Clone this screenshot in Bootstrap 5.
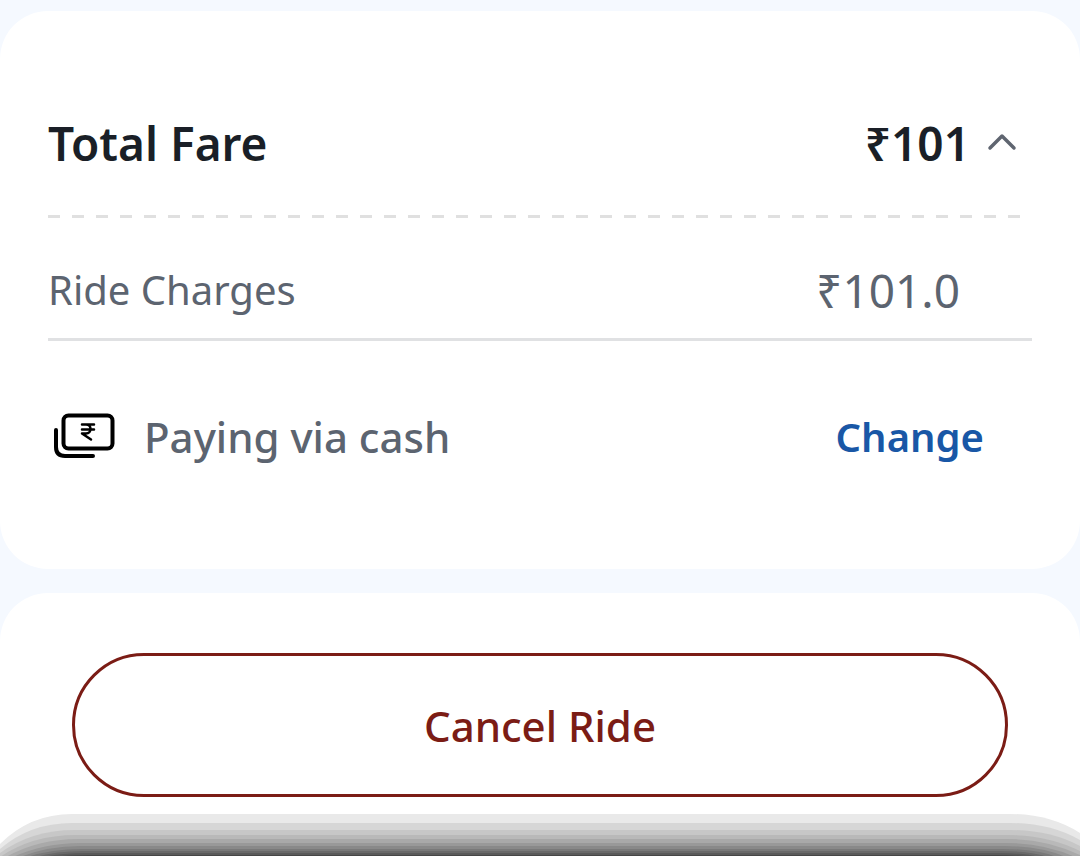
<!DOCTYPE html>
<html lang="en">
<head>
<meta charset="utf-8">
<meta name="viewport" content="width=device-width, initial-scale=1">
<title>Ride fare</title>
<link href="https://cdn.jsdelivr.net/npm/bootstrap@5.3.0/dist/css/bootstrap.min.css" rel="stylesheet">
<style>
  body { background: #f5f9ff; font-family: "Noto Sans", "Open Sans", sans-serif; color: #1a1f27; font-size: 42px; line-height: 60px; }
  .page { padding-top: 11px; gap: 24px; min-height: 100vh; overflow: hidden; }
  .panel { background: #fff; border-radius: 48px; }
  .fare-panel { padding: 96px 48px 102px; }
  .actions-panel { padding: 60px 72px; border-radius: 48px 48px 0 0; }
  .total { font-size: 46px; line-height: 72px; font-weight: 600; gap: 16px; padding: 0 14px 0 0; color: #1a1f27; }
  .muted { color: #5c6470; }
  .dashes { height: 3px; margin: 36px 12px 42px 0; background: repeating-linear-gradient(90deg, #e0e0e0 0 12px, transparent 12px 24px); }
  .charges { font-size: 40px; padding-right: 72px; height: 81px; border-bottom: 3px solid #e0e1e3; }
  .amount { font-size: 46px; }
  .payment { padding: 66px 48px 0 0; }
  .method { font-weight: 500; margin-left: 24px; }
  .change { font-size: 40px; font-weight: 600; color: #1957a6; text-decoration: none; }
  .cancel { height: 144px; border: 3px solid #7b1c15; border-radius: 72px; color: #7b1c15; font-size: 42px; font-weight: 500; }
  .cancel:hover { border-color: #7b1c15; color: #7b1c15; }
  .sheet-shadow { height: 43px; pointer-events: none; }
</style>
</head>
<body>
<main class="page d-flex flex-column position-relative">
  <section class="panel fare-panel">
    <button type="button" class="btn total w-100 border-0 d-flex align-items-center" aria-expanded="true" aria-controls="breakdown">
      <span class="me-auto">Total Fare</span>
      <span>₹101</span>
      <svg width="32" height="24" viewBox="0 0 32 24" fill="none" stroke="#5f6570" stroke-width="3.500" stroke-linecap="round" stroke-linejoin="round" aria-hidden="true"><path d="M4 17 16 5l12 12"/></svg>
    </button>
    <div class="dashes"></div>
    <div id="breakdown" class="charges muted d-flex justify-content-between">
      <span>Ride Charges</span>
      <span class="amount">₹101.0</span>
    </div>
    <div class="payment d-flex align-items-center">
      <svg width="72" height="60" viewBox="48 407 72 60" fill="none" stroke="#000" stroke-width="4" stroke-linecap="round" stroke-linejoin="round" aria-hidden="true">
        <rect x="63.500" y="415.500" width="49" height="33" rx="5"/>
        <path d="M56 430v17q0 9 9 9h28"/>
        <path d="M82 424.500h12M82 429.500h12M82 424.500h4c6 0 6 9 0 9h-4l9 6" stroke-width="2.500"/>
      </svg>
      <span class="method muted me-auto">Paying via cash</span>
      <a href="#" class="change">Change</a>
    </div>
  </section>
  <section class="panel actions-panel flex-grow-1">
    <button type="button" class="btn cancel w-100">Cancel Ride</button>
  </section>
  <svg class="sheet-shadow position-absolute bottom-0 start-0 w-100" viewBox="0 0 1080 43" preserveAspectRatio="none" aria-hidden="true">
    <path fill="#e9e9e9" d="M0 43V30Q30 0 72 0H1010Q1050 0 1080 19V43z"/>
    <path fill="#d6d6d6" d="M0 43V35Q30 9 72 9H1010Q1050 9 1080 26V43z"/>
    <path fill="#c7c7c7" d="M0 43V39Q32 16 74 16H1010Q1050 16 1080 32V43z"/>
    <path fill="#b9b9b9" d="M0 43Q32 21 76 21H1008Q1048 21 1080 37V43z"/>
    <path fill="#a9a9a9" d="M6 43Q38 25 78 25H1008Q1046 25 1080 41V43z"/>
    <path fill="#999" d="M13 43Q44 29 80 29H1006Q1044 29 1075 43z"/>
    <path fill="#898989" d="M20 43Q48 32 80 32H1004Q1040 32 1066 43z"/>
    <path fill="#797979" d="M27 43Q52 35 82 35H1002Q1036 35 1057 43z"/>
    <path fill="#696969" d="M35 43Q56 37 84 37H1000Q1030 37 1048 43z"/>
    <path fill="#5a5a5a" d="M43 43Q62 39 86 39H998Q1024 39 1039 43z"/>
    <path fill="#464646" d="M51 43Q68 41 90 41H996Q1018 41 1030 43z"/>
  </svg>
</main>
<script src="https://cdn.jsdelivr.net/npm/bootstrap@5.3.0/dist/js/bootstrap.bundle.min.js"></script>
</body>
</html>
